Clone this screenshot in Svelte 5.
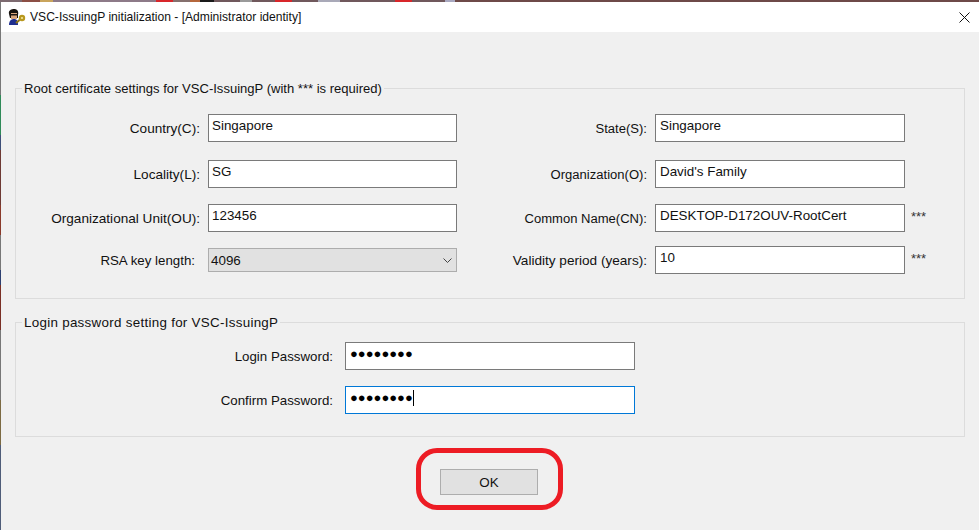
<script>
  const rows = [
    { l: 'Country(C):', v: 'Singapore', r: 'State(S):', w: 'Singapore' },
    { l: 'Locality(L):', v: 'SG', r: 'Organization(O):', w: "David's Family" },
    { l: 'Organizational Unit(OU):', v: '123456', r: 'Common Name(CN):', w: 'DESKTOP-D172OUV-RootCert', req: true }
  ];
</script>

<div class="desktop">
  <div class="window">
    <header class="titlebar">
      <svg class="appicon" width="18" height="17" viewBox="0 0 18 17">
        <path d="M1 16 C1 12 3 10 6 10 C9 10 10 12 10 16Z" fill="#1f2f8f"/>
        <path d="M1 5 C0 1 4 0 6 0 C9 0 11 2 10 6 L10 9 L2 9Z" fill="#17120e"/>
        <rect x="3" y="4" width="6" height="6" fill="#d8a47a"/>
        <rect x="2.5" y="5" width="7" height="1.5" fill="#201812"/>
        <circle cx="14" cy="9" r="3.2" fill="#b8981e"/>
        <circle cx="14" cy="9" r="1.1" fill="#f4e7a0"/>
        <path d="M11.5 11 L8 14" stroke="#8f7414" stroke-width="2"/>
      </svg>
      <span class="title">VSC-IssuingP initialization - [Administrator identity]</span>
      <svg class="close" width="11" height="11" viewBox="0 0 11 11"><path d="M.5.5l10 10M10.5.5l-10 10" stroke="#111" fill="none"/></svg>
    </header>

    <main class="body">
      <section class="group root">
        <h2>Root certificate settings for VSC-IssuingP (with *** is required)</h2>
        <div class="grid">
          {#each rows as row}
            <label>{row.l}</label>
            <input value={row.v} />
            <label class="second">{row.r}</label>
            <input class="right" value={row.w} />
            <span class="req">{row.req ? '***' : ''}</span>
          {/each}
          <label class="rsa">RSA key length:</label>
          <div class="select">4096
            <svg width="9" height="5" viewBox="0 0 9 5"><path d="M.5.5L4.5 4.5 8.5.5" stroke="#444" fill="none"/></svg>
          </div>
          <label class="validity">Validity period (years):</label>
          <input class="right" value="10" />
          <span class="req">***</span>
        </div>
      </section>

      <section class="group login">
        <h2>Login password setting for VSC-IssuingP</h2>
        <div class="pw">
          <label>Login Password:</label>
          <div class="pwbox"><span class="dots">{'●'.repeat(8)}</span></div>
          <label>Confirm Password:</label>
          <div class="pwbox focus"><span class="dots">{'●'.repeat(8)}</span><i class="caret"></i></div>
        </div>
      </section>

      <div class="actions">
        <div class="ring"></div>
        <button>OK</button>
      </div>
    </main>
  </div>
</div>

<style>
  :global(body) { margin: 0; background: #6b5a60; }
  .desktop {
    width: 979px; height: 530px; padding-top: 2px; box-sizing: border-box; overflow: hidden;
    background:
      linear-gradient(90deg, #7d6a70 0 22px, #8c4f45 22px 40px, #c9a45c 40px 53px, #8d7a88 53px 156px, #d8262a 156px 173px, #85706e 173px 190px, #b5673c 190px 200px, #1a1a1a 200px 214px, #70585c 214px 240px, #9a9a9a 240px 252px, #70585c 252px 275px, #d8262a 275px 292px, #70585c 292px 318px, #a9a9b8 318px 340px, #70585c 340px 395px, #d8262a 395px 412px, #70585c 412px 445px, #a8a8c0 445px 455px, #6e4a48 455px) top left / 100% 2px no-repeat,
      linear-gradient(180deg, #777 0 95px, #2f8a58 95px 135px, #3d4f78 135px 150px, #6e3a34 150px 205px, #8a3a2a 205px 235px, #777 235px 270px, #2c3f70 270px 285px, #7a2f25 285px 330px, #777 330px 400px, #7c6a42 400px 445px, #4f5c78 445px) left top / 1px 100% no-repeat;
  }
  .window { height: 528px; margin-left: 1px; background: #f0f0f0; display: flex; flex-direction: column; font: 14px "Liberation Sans", Arial, sans-serif; color: #111; }
  .titlebar { height: 30px; flex: none; background: #fff; display: flex; align-items: center; padding: 0 9px 0 7px; box-sizing: border-box; }
  .appicon { margin-right: 4px; }
  .title { flex: 1; font-size: 12.1px; }
  .body { flex: 1; padding: 0 14px; position: relative; }
  .group { border: 1px solid #dcdcdc; position: relative; box-sizing: border-box; }
  .group h2 { position: absolute; top: -8px; left: 6px; margin: 0; padding: 0 2px; background: #f0f0f0; font: inherit; line-height: 16px; }
  .root h2 { font-size: 13.05px; }
  .login h2 { font-size: 13.4px; letter-spacing: .28px; }
  .root { margin-top: 56px; height: 211px; padding: 25px 0 0; }
  .login { margin-top: 23px; height: 115px; padding: 19px 0 0; }
  .grid { display: grid; grid-template-columns: 184px 249px 198px 250px auto; grid-template-rows: 46px 44px 42px 28px; margin-left: 8px; }
  label { justify-self: end; padding: 7px 8px 0 0; font-size: 13.6px; }
  .second { font-size: 13.05px; }
  .rsa { font-size: 13.3px; padding-right: 13px; }
  input { box-sizing: border-box; height: 28px; width: 100%; border: 1px solid #7a7a7a; background: #fff; margin: 0; padding: 0 0 6px 3px; font: inherit; font-size: 13.4px; color: #111; outline: none; }
  input.right { padding-left: 4px; }
  .req { font-size: 13px; padding: 5px 0 0 6px; color: #333; }
  .select { box-sizing: border-box; height: 24px; margin-top: 2px; border: 1px solid #adadad; background: #e1e1e1; display: flex; align-items: center; justify-content: space-between; padding: 0 4px 0 2px; font-size: 13.4px; }
  .pw { display: grid; grid-template-columns: 322px 290px; grid-template-rows: 44px 28px; margin-left: 7px; }
  .pw label { font-size: 13.3px; padding-right: 12px; }
  .pwbox { box-sizing: border-box; border: 1px solid #7a7a7a; background: #fff; height: 28px; padding: 2px 0 0 4px; display: flex; align-items: flex-start; }
  .pwbox.focus { border-color: #0078d7; }
  .dots { font-size: 13px; line-height: 18px; color: #000; }
  .caret { width: 1px; height: 16px; background: #000; margin-top: 1px; }
  .actions { position: relative; display: flex; justify-content: center; padding-top: 32px; }
  button { width: 98px; height: 26px; margin-left: -2px; border: 1px solid #adadad; background: #e1e1e1; font: inherit; font-size: 13.4px; color: #111; padding: 0; }
  .ring { position: absolute; left: 401px; top: 11px; width: 147px; height: 62px; box-sizing: border-box; border: 5px solid #ed1c24; border-radius: 21px; }
</style>
